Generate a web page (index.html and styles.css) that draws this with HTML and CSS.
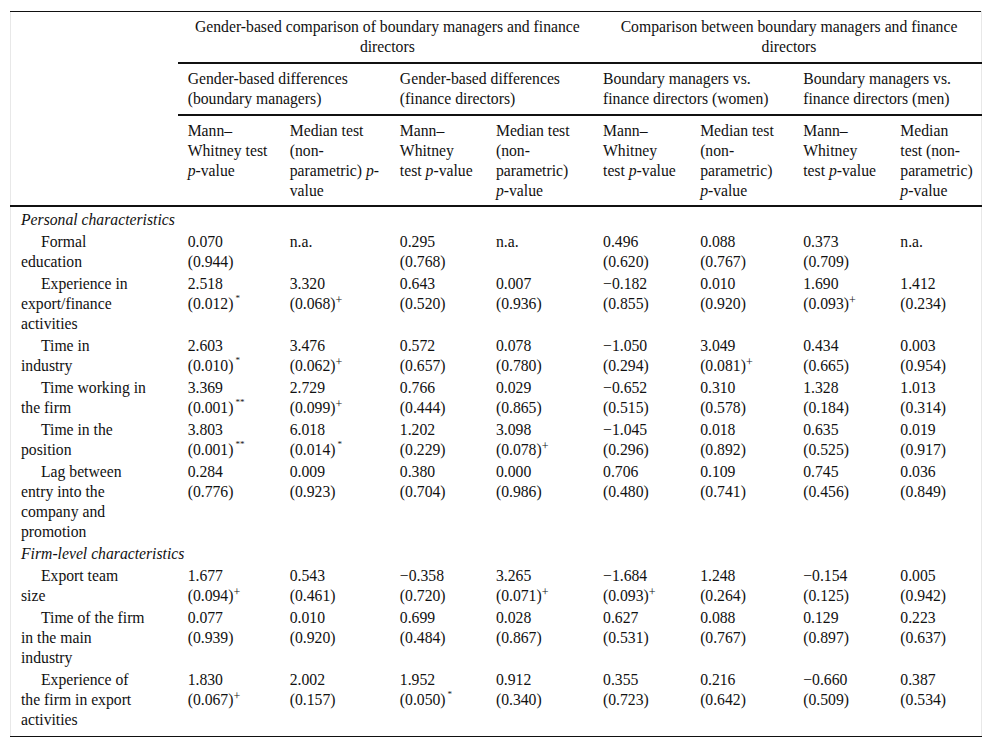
FILE: index.html
```html
<!DOCTYPE html>
<html lang="en">
<head>
<meta charset="utf-8">
<title>Table</title>
<link rel="stylesheet" href="styles.css">
</head>
<body>
<div class="wrap">
<table class="tbl">
  <colgroup>
    <col class="c0"><col class="c1"><col class="c2"><col class="c3"><col class="c4"><col class="c5"><col class="c6"><col class="c7"><col class="c8">
  </colgroup>
  <thead>
    <tr class="h1">
      <th class="blank" rowspan="3"></th>
      <th colspan="4" class="center">Gender-based comparison of boundary managers and finance directors</th>
      <th colspan="4" class="center">Comparison between boundary managers and finance directors</th>
    </tr>
    <tr class="h2">
      <th colspan="2">Gender-based differences<br>(boundary managers)</th>
      <th colspan="2">Gender-based differences<br>(finance directors)</th>
      <th colspan="2">Boundary managers vs.<br>finance directors (women)</th>
      <th colspan="2">Boundary managers vs.<br>finance directors (men)</th>
    </tr>
    <tr class="h3">
      <th>Mann–<br>Whitney test<br><i>p</i>-value</th>
      <th>Median test<br>(non-<br>parametric) <i>p</i>-<br>value</th>
      <th>Mann–<br>Whitney<br>test <i>p</i>-value</th>
      <th>Median test<br>(non-<br>parametric)<br><i>p</i>-value</th>
      <th>Mann–<br>Whitney<br>test <i>p</i>-value</th>
      <th>Median test<br>(non-<br>parametric)<br><i>p</i>-value</th>
      <th>Mann–<br>Whitney<br>test <i>p</i>-value</th>
      <th>Median<br>test (non-<br>parametric)<br><i>p</i>-value</th>
    </tr>
  </thead>
  <tbody>
    <tr class="sec first"><td colspan="9"><i>Personal characteristics</i></td></tr>
    <tr>
      <td class="lbl">Formal<br>education</td>
      <td>0.070<br>(0.944)</td><td>n.a.</td>
      <td>0.295<br>(0.768)</td><td>n.a.</td>
      <td>0.496<br>(0.620)</td><td>0.088<br>(0.767)</td>
      <td>0.373<br>(0.709)</td><td>n.a.</td>
    </tr>
    <tr>
      <td class="lbl">Experience in<br>export/finance<br>activities</td>
      <td>2.518<br>(0.012)<sup class="st">*</sup></td><td>3.320<br>(0.068)<sup>+</sup></td>
      <td>0.643<br>(0.520)</td><td>0.007<br>(0.936)</td>
      <td>−0.182<br>(0.855)</td><td>0.010<br>(0.920)</td>
      <td>1.690<br>(0.093)<sup>+</sup></td><td>1.412<br>(0.234)</td>
    </tr>
    <tr>
      <td class="lbl">Time in<br>industry</td>
      <td>2.603<br>(0.010)<sup class="st">*</sup></td><td>3.476<br>(0.062)<sup>+</sup></td>
      <td>0.572<br>(0.657)</td><td>0.078<br>(0.780)</td>
      <td>−1.050<br>(0.294)</td><td>3.049<br>(0.081)<sup>+</sup></td>
      <td>0.434<br>(0.665)</td><td>0.003<br>(0.954)</td>
    </tr>
    <tr>
      <td class="lbl">Time working in<br>the firm</td>
      <td>3.369<br>(0.001)<sup class="st">**</sup></td><td>2.729<br>(0.099)<sup>+</sup></td>
      <td>0.766<br>(0.444)</td><td>0.029<br>(0.865)</td>
      <td>−0.652<br>(0.515)</td><td>0.310<br>(0.578)</td>
      <td>1.328<br>(0.184)</td><td>1.013<br>(0.314)</td>
    </tr>
    <tr>
      <td class="lbl">Time in the<br>position</td>
      <td>3.803<br>(0.001)<sup class="st">**</sup></td><td>6.018<br>(0.014)<sup class="st">*</sup></td>
      <td>1.202<br>(0.229)</td><td>3.098<br>(0.078)<sup>+</sup></td>
      <td>−1.045<br>(0.296)</td><td>0.018<br>(0.892)</td>
      <td>0.635<br>(0.525)</td><td>0.019<br>(0.917)</td>
    </tr>
    <tr>
      <td class="lbl">Lag between<br>entry into the<br>company and<br>promotion</td>
      <td>0.284<br>(0.776)</td><td>0.009<br>(0.923)</td>
      <td>0.380<br>(0.704)</td><td>0.000<br>(0.986)</td>
      <td>0.706<br>(0.480)</td><td>0.109<br>(0.741)</td>
      <td>0.745<br>(0.456)</td><td>0.036<br>(0.849)</td>
    </tr>
    <tr class="sec"><td colspan="9"><i>Firm-level characteristics</i></td></tr>
    <tr>
      <td class="lbl">Export team<br>size</td>
      <td>1.677<br>(0.094)<sup>+</sup></td><td>0.543<br>(0.461)</td>
      <td>−0.358<br>(0.720)</td><td>3.265<br>(0.071)<sup>+</sup></td>
      <td>−1.684<br>(0.093)<sup>+</sup></td><td>1.248<br>(0.264)</td>
      <td>−0.154<br>(0.125)</td><td>0.005<br>(0.942)</td>
    </tr>
    <tr>
      <td class="lbl">Time of the firm<br>in the main<br>industry</td>
      <td>0.077<br>(0.939)</td><td>0.010<br>(0.920)</td>
      <td>0.699<br>(0.484)</td><td>0.028<br>(0.867)</td>
      <td>0.627<br>(0.531)</td><td>0.088<br>(0.767)</td>
      <td>0.129<br>(0.897)</td><td>0.223<br>(0.637)</td>
    </tr>
    <tr class="last">
      <td class="lbl">Experience of<br>the firm in export<br>activities</td>
      <td>1.830<br>(0.067)<sup>+</sup></td><td>2.002<br>(0.157)</td>
      <td>1.952<br>(0.050)<sup class="st">*</sup></td><td>0.912<br>(0.340)</td>
      <td>0.355<br>(0.723)</td><td>0.216<br>(0.642)</td>
      <td>−0.660<br>(0.509)</td><td>0.387<br>(0.534)</td>
    </tr>
  </tbody>
</table>
</div>
</body>
</html>
```

FILE: styles.css
```css
html, body {
  margin: 0;
  padding: 0;
  background: #ffffff;
}
.wrap {
  padding: 11px 0 0 10px;
}
.tbl {
  width: 972px;
  border-collapse: collapse;
  table-layout: fixed;
  font-family: "Liberation Serif", "Times New Roman", serif;
  font-size: 15.7px;
  line-height: 20px;
  color: #111111;
  border-left: 1px solid #e8e8e8;
  border-right: 1px solid #e8e8e8;
  border-top: 1px solid #111;
  border-bottom: 1px solid #111;
}
.c0 { width: 167px; }
.c1 { width: 102px; }
.c2 { width: 110px; }
.c3 { width: 96px; }
.c4 { width: 107px; }
.c5 { width: 97px; }
.c6 { width: 103px; }
.c7 { width: 97px; }
.c8 { width: 91px; }
.tbl th {
  font-weight: normal;
  text-align: left;
  vertical-align: top;
  padding: 5px 0 5px 10px;
  white-space: nowrap;
}
.tbl th.center {
  text-align: center;
  white-space: normal;
  padding-right: 6px;
}
.tbl .h1 th:not(.blank),
.tbl .h2 th {
  border-bottom: 2px solid #111;
}
.tbl .h3 th {
  border-bottom: 2px solid #111;
  padding-bottom: 4px;
}
.tbl th.blank {
  border-bottom: 2px solid #111;
}
.tbl td {
  vertical-align: top;
  padding: 1px 0 1px 10px;
  white-space: nowrap;
}
.tbl tr.first td {
  padding-top: 3px;
}
.tbl td.lbl {
  text-indent: 20px;
}
.tbl tr.last td {
  padding-bottom: 6px;
}
sup {
  font-size: 12px;
  line-height: 0;
  vertical-align: 5px;
}
sup.st {
  font-size: 9px;
  vertical-align: 8px;
  margin-left: 2px;
}
```
